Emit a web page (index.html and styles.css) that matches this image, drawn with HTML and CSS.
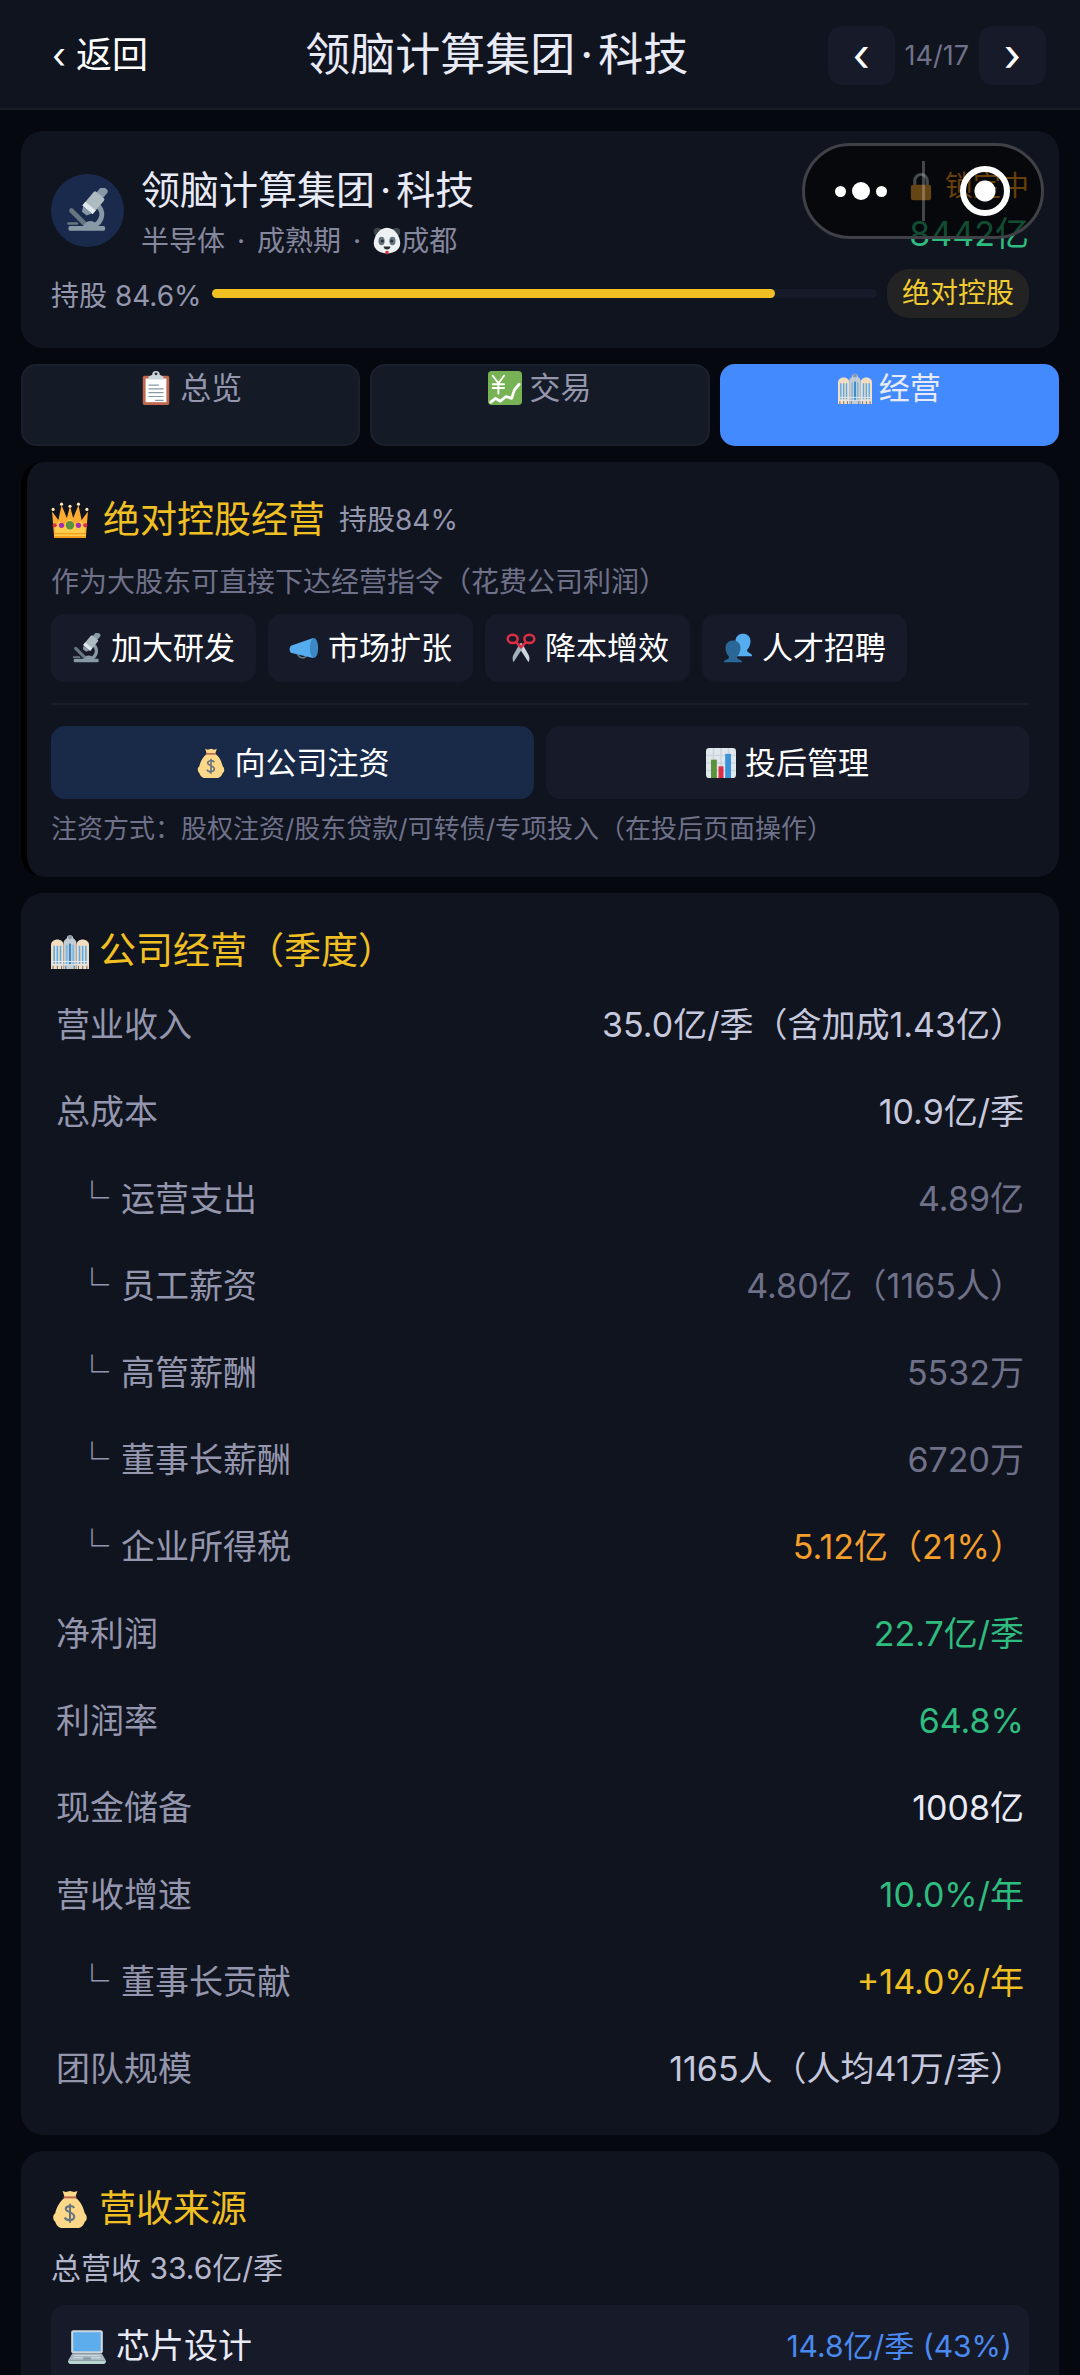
FILE: index.html
```html
<!DOCTYPE html>
<html lang="zh-CN">
<head>
  <meta charset="UTF-8">
  <meta name="viewport" content="width=device-width, initial-scale=1">
  <title>领脑计算集团·科技</title>
  <link rel="stylesheet" href="styles.css">
</head>
<body>
  <svg class="sprite" aria-hidden="true">
    <symbol id="i-microscope" viewBox="0 0 36 36">
      <path d="M24 13c8 5 7 15-3 19" fill="none" stroke="#8899a6" stroke-width="4"/>
      <path d="M4.500 18.500l11 11" stroke="#66757f" stroke-width="4" stroke-linecap="round"/>
      <path d="M2 29h7" stroke="#66757f" stroke-width="2" stroke-linecap="round"/>
      <path d="M14 33a6 6 0 0 1 12 0z" fill="#8899a6"/>
      <rect x="2" y="31" width="30" height="4" rx="1.500" fill="#8899a6"/>
      <g transform="rotate(40 21 13)">
        <rect x="18" y="-4" width="7" height="8" rx="2" fill="#8899a6"/>
        <rect x="16" y="3" width="11" height="16" rx="1.500" fill="#aebbc1"/>
        <rect x="16" y="15" width="11" height="4" fill="#e1e8ed"/>
        <path d="M17 19h9l-2 4h-5z" fill="#8899a6"/>
      </g>
    </symbol>
    <symbol id="i-panda" viewBox="0 0 36 36">
      <circle cx="6" cy="6" r="5" fill="#3c454b"/>
      <circle cx="30" cy="6" r="5" fill="#3c454b"/>
      <path d="M18 1C8 1 1 12 1 21c0 9 9 13 17 13s17-4 17-13C35 12 28 1 18 1z" fill="#eef1f3"/>
      <ellipse cx="11" cy="18" rx="4" ry="5.500" fill="#66757f"/>
      <ellipse cx="25" cy="18" rx="4" ry="5.500" fill="#66757f"/>
      <circle cx="12" cy="18" r="2" fill="#292f33"/>
      <circle cx="24" cy="18" r="2" fill="#292f33"/>
      <path d="M14 25h8c1 2-2 4-4 4s-5-2-4-4z" fill="#292f33"/>
      <path d="M16 31h4v2a2 2 0 0 1-4 0z" fill="#dd2e44"/>
    </symbol>
    <symbol id="i-lock" viewBox="0 0 36 36">
      <path d="M10 18v-8a8 8 0 0 1 16 0v8" fill="none" stroke="#aab8c2" stroke-width="4"/>
      <rect x="5" y="15" width="26" height="20" rx="3" fill="#ffac33"/>
    </symbol>
    <symbol id="i-clipboard" viewBox="0 0 36 36">
      <rect x="4" y="5" width="28" height="31" rx="2" fill="#c1694f"/>
      <rect x="7" y="8" width="22" height="25" fill="#fff"/>
      <path d="M10 9V6l4-2a4 4 0 0 1 8 0l4 2v3z" fill="#ccd6dd"/>
      <circle cx="18" cy="3" r="1.500" fill="#292f33"/>
      <path d="M10 15h11M10 19h16M10 23h16M10 27h16M17 31h9" stroke="#8899a6" stroke-width="1.300"/>
    </symbol>
    <symbol id="i-yen" viewBox="0 0 36 36">
      <rect width="36" height="36" rx="4" fill="#77b255"/>
      <path d="M5 5l6 8 6-8M11 13v11M5 14h12M5 18h12" fill="none" stroke="#fff" stroke-width="2" stroke-linecap="round"/>
      <path d="M3 33l5-4 5 3 6-5 6 2 3-9 5-6" fill="none" stroke="#fff" stroke-width="3" stroke-linecap="round" stroke-linejoin="round"/>
    </symbol>
    <symbol id="i-city" viewBox="0 0 36 36">
      <path d="M0 35V12c0-3 3-5 6-5s6 2 6 5v23z" fill="#f3dcc0"/>
      <path d="M24 35V12c0-3 3-5 6-5s6 2 6 5v23z" fill="#f3dcc0"/>
      <path d="M12 35V10c0-2 2-3 3-4a3 3 0 0 1 6 0c1 1 3 2 3 4v25z" fill="#c3ccd2"/>
      <path d="M3 13v17M6 13v17M9 13v17M27 13v17M30 13v17M33 13v17" stroke="#55acee" stroke-width="1.500"/>
      <path d="M18 11v20" stroke="#3b88c3" stroke-width="2"/>
      <path d="M15 12v19M21 12v19" stroke="#55acee" stroke-width="1"/>
      <circle cx="18" cy="5" r="2" fill="#8899a6"/>
      <path d="M0 28h36M0 31h36" stroke="#e1e8ed" stroke-width="1"/>
      <path d="M2 32v3M6 32v3M10 32v3M14 32v3M22 32v3M26 32v3M30 32v3M34 32v3" stroke="#66757f" stroke-width="1"/>
    </symbol>
    <symbol id="i-crown" viewBox="0 0 36 36">
      <path d="M3 35L1 10l6 8 3-14 5 12 3-11 3 11 5-12 3 14 6-8-2 25z" fill="#ffac33"/>
      <path d="M3 24l5-5 4 4 6-6 6 6 4-4 5 5-1 7H4z" fill="#ffcc4d"/>
      <path d="M3 31h30v3H3z" fill="#ffcc4d"/>
      <path d="M3 31h30M3 34h30" stroke="#f4900c" stroke-width="1"/>
      <g fill="#ffe8b6">
        <circle cx="2" cy="8" r="1.500"/><circle cx="10" cy="3" r="1.500"/><circle cx="18" cy="5" r="1.500"/>
        <circle cx="26" cy="3" r="1.500"/><circle cx="34" cy="8" r="1.500"/>
      </g>
      <circle cx="18" cy="23" r="4" fill="#5c913b"/>
      <circle cx="10" cy="23" r="2.500" fill="#a12fb0"/>
      <circle cx="26" cy="23" r="2.500" fill="#a12fb0"/>
      <circle cx="3.500" cy="23" r="2" fill="#dd2e44"/>
      <circle cx="32.500" cy="23" r="2" fill="#dd2e44"/>
    </symbol>
    <symbol id="i-megaphone" viewBox="0 0 36 36">
      <path d="M10 22c0 10 12 10 12 2" fill="none" stroke="#66757f" stroke-width="2"/>
      <path d="M3 15L29 6v24L3 24c-3-1-3-8 0-9z" fill="#55acee"/>
      <ellipse cx="30" cy="18" rx="5" ry="12" fill="#3b88c3"/>
    </symbol>
    <symbol id="i-scissors" viewBox="0 0 36 36">
      <path d="M14 15l13 20c2-4 1-7 0-9l-8-14z" fill="#ccd6dd"/>
      <path d="M22 15L9 35c-2-4-1-7 0-9l8-14z" fill="#a3b1bb"/>
      <ellipse cx="8" cy="7" rx="6" ry="5" fill="none" stroke="#dd2e44" stroke-width="3"/>
      <ellipse cx="28" cy="7" rx="6" ry="5" fill="none" stroke="#dd2e44" stroke-width="3"/>
      <path d="M12 11l6 6 6-6" fill="none" stroke="#dd2e44" stroke-width="3"/>
    </symbol>
    <symbol id="i-people" viewBox="0 0 36 36">
      <path d="M15 10c0-6 4-9 9-9s9 3 9 9c0 5-2 8-4 10v2c1 2 6 2 6 6H15z" fill="#55acee"/>
      <path d="M3 18c0-6 4-9 9-9s9 3 9 9c0 5-2 8-4 10v2c1 2 6 2 6 5H1c0-3 5-3 6-5v-2c-2-2-4-5-4-10z" fill="#2a6797"/>
    </symbol>
    <symbol id="i-moneybag" viewBox="0 0 36 36">
      <path d="M11 1l3 1 4-1 4 1 3-1-2 6c6 4 8 11 9 15 3 3 2 7 0 8-1 3-3 6-7 6H11c-4 0-6-3-7-6-2-1-3-6 0-8 1-5 4-11 9-15z" fill="#fdd888"/>
      <path d="M12 6h12v2H12z" fill="#bf6952"/>
      <path d="M22 17c-2-3-8-2-8 1s8 3 8 7-7 5-9 1M18 13v18" fill="none" stroke="#67757f" stroke-width="2"/>
    </symbol>
    <symbol id="i-chart" viewBox="0 0 36 36">
      <rect width="36" height="36" rx="4" fill="#e1e8ed"/>
      <path d="M0 9h36M0 18h36M0 27h36M9 0v36M18 0v36M27 0v36" stroke="#ccd6dd" stroke-width="2"/>
      <path d="M6 14h7v22H6z" fill="#5c913b"/>
      <path d="M15 22h6v14h-6z" fill="#dd2e44"/>
      <path d="M23 7h7v29h-7z" fill="#3b94d9"/>
    </symbol>
    <symbol id="i-laptop" viewBox="0 0 36 36">
      <rect x="3" y="3" width="30" height="22" rx="2" fill="#ccd6dd"/>
      <rect x="5" y="5" width="26" height="18" fill="#5dadec"/>
      <path d="M4 25h28l4 7H0z" fill="#aab8c2"/>
      <path d="M6 27h24M5 29h9M22 29h9" stroke="#ccd6dd" stroke-width="1"/>
      <path d="M15 29h6l1 2h-8z" fill="#8899a6"/>
      <path d="M0 32h36c0 2-1 3-2 3H2c-1 0-2-1-2-3z" fill="#b8d4cf"/>
    </symbol>
  </svg>

  <header class="topbar">
    <button class="back" type="button">‹ 返回</button>
    <h1>领脑计算集团<span class="dot">·</span>科技</h1>
    <nav class="pager">
      <button type="button" aria-label="上一家">‹</button>
      <span>14/17</span>
      <button type="button" aria-label="下一家">›</button>
    </nav>
  </header>

  <!-- 小程序右上角胶囊 -->
  <div class="capsule">
    <button class="capsule-more" type="button" aria-label="更多"><i></i><i></i><i></i></button>
    <button class="capsule-close" type="button" aria-label="关闭"><i></i></button>
  </div>

  <main class="page">
    <section class="card company">
      <div class="company-head">
        <div class="avatar"><svg class="icon icon-lg"><use href="#i-microscope"/></svg></div>
        <div class="company-info">
          <h2>领脑计算集团<span class="dot">·</span>科技</h2>
          <p>半导体<span class="sep">·</span>成熟期<span class="sep">·</span><svg class="icon icon-sm"><use href="#i-panda"/></svg>成都</p>
        </div>
        <div class="company-value">
          <p class="locked"><svg class="icon icon-sm"><use href="#i-lock"/></svg> 锁定中</p>
          <p class="value">8442亿</p>
        </div>
      </div>
      <div class="stake">
        <span>持股 84.6%</span>
        <div class="bar"><div class="bar-fill" style="width: 84.6%"></div></div>
        <span class="pill">绝对控股</span>
      </div>
    </section>

    <nav class="tabs">
      <button type="button"><svg class="icon"><use href="#i-clipboard"/></svg>总览</button>
      <button type="button"><svg class="icon"><use href="#i-yen"/></svg>交易</button>
      <button type="button" class="active"><svg class="icon"><use href="#i-city"/></svg>经营</button>
    </nav>

    <section class="card control">
      <h3><svg class="icon icon-md"><use href="#i-crown"/></svg>绝对控股经营 <small>持股84%</small></h3>
      <p class="desc">作为大股东可直接下达经营指令（花费公司利润）</p>
      <div class="chips">
        <button type="button"><svg class="icon icon-sm"><use href="#i-microscope"/></svg>加大研发</button>
        <button type="button"><svg class="icon icon-sm"><use href="#i-megaphone"/></svg>市场扩张</button>
        <button type="button"><svg class="icon icon-sm"><use href="#i-scissors"/></svg>降本增效</button>
        <button type="button"><svg class="icon icon-sm"><use href="#i-people"/></svg>人才招聘</button>
      </div>
      <div class="actions">
        <button type="button" class="primary"><svg class="icon icon-sm"><use href="#i-moneybag"/></svg>向公司注资</button>
        <button type="button"><svg class="icon icon-sm"><use href="#i-chart"/></svg>投后管理</button>
      </div>
      <p class="note">注资方式：股权注资/股东贷款/可转债/专项投入（在投后页面操作）</p>
    </section>

    <section class="card finance">
      <h3><svg class="icon icon-md"><use href="#i-city"/></svg>公司经营（季度）</h3>
      <table>
        <tbody>
          <tr><th scope="row">营业收入</th><td>35.0亿/季（含加成1.43亿）</td></tr>
          <tr><th scope="row">总成本</th><td>10.9亿/季</td></tr>
          <tr class="sub"><th scope="row"><span class="branch">└</span>运营支出</th><td>4.89亿</td></tr>
          <tr class="sub"><th scope="row"><span class="branch">└</span>员工薪资</th><td>4.80亿（1165人）</td></tr>
          <tr class="sub"><th scope="row"><span class="branch">└</span>高管薪酬</th><td>5532万</td></tr>
          <tr class="sub"><th scope="row"><span class="branch">└</span>董事长薪酬</th><td>6720万</td></tr>
          <tr class="sub"><th scope="row"><span class="branch">└</span>企业所得税</th><td class="orange">5.12亿（21%）</td></tr>
          <tr><th scope="row">净利润</th><td class="green">22.7亿/季</td></tr>
          <tr><th scope="row">利润率</th><td class="green">64.8%</td></tr>
          <tr><th scope="row">现金储备</th><td class="white">1008亿</td></tr>
          <tr><th scope="row">营收增速</th><td class="green">10.0%/年</td></tr>
          <tr class="sub"><th scope="row"><span class="branch">└</span>董事长贡献</th><td class="gold">+14.0%/年</td></tr>
          <tr><th scope="row">团队规模</th><td>1165人（人均41万/季）</td></tr>
        </tbody>
      </table>
    </section>

    <section class="card revenue">
      <h3><svg class="icon icon-md"><use href="#i-moneybag"/></svg>营收来源</h3>
      <p class="total">总营收 33.6亿/季</p>
      <div class="source">
        <span class="source-name"><svg class="icon icon-md"><use href="#i-laptop"/></svg>芯片设计</span>
        <span class="source-value">14.8亿/季 (43%)</span>
      </div>
    </section>
  </main>
</body>
</html>
```
FILE: styles.css
```css
* {
  box-sizing: border-box;
  margin: 0;
  padding: 0;
}
body {
  height: 100vh;
  overflow: hidden;
  background: #05080f;
  color: #e8eaf6;
  font-family: Inter, "Noto Sans CJK SC", sans-serif;
  font-size: 28px;
}
h1, h2, h3, th, small {
  font-weight: 400;
}
button {
  border: none;
  background: #161a29;
  color: #fff;
  font: inherit;
  cursor: pointer;
}
.sprite {
  display: none;
}
.icon {
  width: 34px;
  height: 34px;
  flex: none;
}
.icon-sm {
  width: 28px;
  height: 28px;
}
.icon-md {
  width: 38px;
  height: 38px;
}
.icon-lg {
  width: 44px;
  height: 44px;
}

/* 顶栏 */
.topbar {
  display: flex;
  align-items: center;
  justify-content: space-between;
  height: 110px;
  padding: 2px 34px 0;
  background: #10141f;
  border-bottom: 2px solid #191d28;
}
.back {
  padding: 8px 18px;
  background: none;
  font-size: 36px;
  line-height: 44px;
}
.topbar h1 {
  font-size: 45px;
  line-height: 60px;
}
.dot {
  padding: 0 5px;
}
.pager {
  display: flex;
  align-items: center;
  gap: 10px;
  color: #6f7189;
  font-size: 27px;
}
.pager button {
  width: 67px;
  height: 59px;
  border-radius: 14px;
  font-size: 45px;
  line-height: 56px;
}

.capsule {
  position: absolute;
  top: 143px;
  right: 36px;
  z-index: 2;
  display: flex;
  width: 242px;
  height: 96px;
  padding: 15px 0;
  background: rgba(0, 0, 0, 0.6);
  border: 3px solid #3f4147;
  border-radius: 48px;
}
.capsule button {
  display: flex;
  flex: 1;
  align-items: center;
  justify-content: center;
  background: none;
}
.capsule i {
  background: #fff;
  border-radius: 50%;
}
.capsule .capsule-more {
  gap: 6px;
  padding-right: 4px;
  border-right: 3px solid rgba(255, 255, 255, 0.25);
}
.capsule .capsule-close {
  padding-left: 4px;
}
.capsule-more i {
  width: 11px;
  height: 11px;
}
.capsule-more i:nth-child(2) {
  width: 18px;
  height: 18px;
}
.capsule-close i {
  width: 50px;
  height: 50px;
  border: 6px solid #fff;
  background: radial-gradient(circle, #fff 10px, transparent 11px);
}

/* 卡片 */
.page {
  display: flex;
  flex-direction: column;
  gap: 16px;
  padding: 21px;
}
.card {
  padding: 28px 30px 26px;
  background: #10141f;
  border-radius: 22px;
}
.card h3 {
  display: flex;
  align-items: center;
  gap: 10px;
  color: #f0c023;
  font-size: 37px;
  line-height: 60px;
}
.card h3 small {
  color: #9496ad;
  font-size: 28px;
}

.company {
  padding-bottom: 30px;
}
.company-head {
  display: flex;
  align-items: center;
}
.avatar {
  display: flex;
  align-items: center;
  justify-content: center;
  width: 73px;
  height: 73px;
  margin-right: 17px;
  background: #192a4c;
  border-radius: 50%;
}
.company-info {
  flex: 1;
}
.company-info h2 {
  font-size: 39px;
  line-height: 62px;
}
.company-info p {
  display: flex;
  align-items: center;
  color: #85879d;
  line-height: 40px;
}
.sep {
  padding: 0 12px;
}
.company-value {
  text-align: right;
  line-height: 47px;
}
.locked {
  display: flex;
  align-items: center;
  justify-content: flex-end;
  gap: 10px;
  color: #ff9f1a;
}
.value {
  color: #2ebd7f;
  font-size: 34px;
}
.stake {
  display: flex;
  align-items: center;
  gap: 10px;
  margin-top: 8px;
  color: #9496ad;
}
.bar {
  flex: 1;
  height: 9px;
  background: #161a29;
  border-radius: 5px;
}
.bar-fill {
  height: 100%;
  background: #f0c023;
  border-radius: 5px;
}
.pill {
  padding: 0 15px;
  background: #232323;
  border-radius: 22px;
  color: #f0cc30;
  line-height: 49px;
}

.tabs {
  display: flex;
  gap: 10px;
}
.tabs button {
  display: flex;
  flex: 1;
  align-items: flex-start;
  justify-content: center;
  gap: 7px;
  height: 82px;
  background: #151a27;
  border: 2px solid #1c202d;
  border-radius: 15px;
  color: #9496ad;
  font-size: 31px;
  line-height: 44px;
}
.tabs .icon {
  margin-top: 5px;
}
.tabs .active {
  background: #448aff;
  border-color: #448aff;
  color: #e8eaf6;
}

.control {
  padding-left: 24px;
  border-left: 6px solid #000;
}
.control h3 {
  gap: 14px;
}
.desc {
  margin: 10px 0;
  color: #6f7189;
  line-height: 44px;
}
.chips, .actions {
  display: flex;
  gap: 12px;
}
.chips button, .actions button {
  display: flex;
  align-items: center;
  justify-content: center;
  gap: 9px;
  height: 68px;
  padding: 0 21px;
  border-radius: 14px;
  font-size: 31px;
  line-height: 44px;
}
.chips .icon, .actions .icon {
  width: 30px;
  height: 30px;
}
.actions {
  margin-top: 21px;
  padding-top: 21px;
  border-top: 2px solid #191d28;
}
.actions button {
  flex: 1;
  height: 73px;
}
.actions .primary {
  background: #182a48;
}
.note {
  margin-top: 8px;
  color: #6f7189;
  font-size: 26px;
  line-height: 44px;
}

/* 经营数据 */
.finance {
  padding-bottom: 23px;
}
table {
  width: 100%;
  border-collapse: collapse;
  font-size: 34px;
  line-height: 44px;
}
tr {
  height: 87px;
}
th, td {
  padding: 0 5px;
}
th {
  color: #9496ad;
  text-align: left;
}
td {
  color: #c6c8de;
  text-align: right;
}
.sub th {
  padding-left: 24px;
}
.sub td {
  color: #6f7189;
}
.branch {
  margin-right: 12px;
}
.finance .green {
  color: #2ebd7f;
}
.finance .orange {
  color: #f59e2a;
}
.finance .gold {
  color: #f0c023;
}
.finance .white {
  color: #e8eaf6;
}

.total {
  color: #b4b6cc;
  font-size: 30px;
  line-height: 58px;
}
.source {
  display: flex;
  align-items: center;
  justify-content: space-between;
  margin-top: 8px;
  padding: 15px 17px 60px;
  background: #161a29;
  border-radius: 14px;
  line-height: 52px;
}
.source-name {
  display: flex;
  align-items: center;
  gap: 10px;
  font-size: 34px;
}
.source-value {
  color: #4a8af0;
  font-size: 30px;
}
```
